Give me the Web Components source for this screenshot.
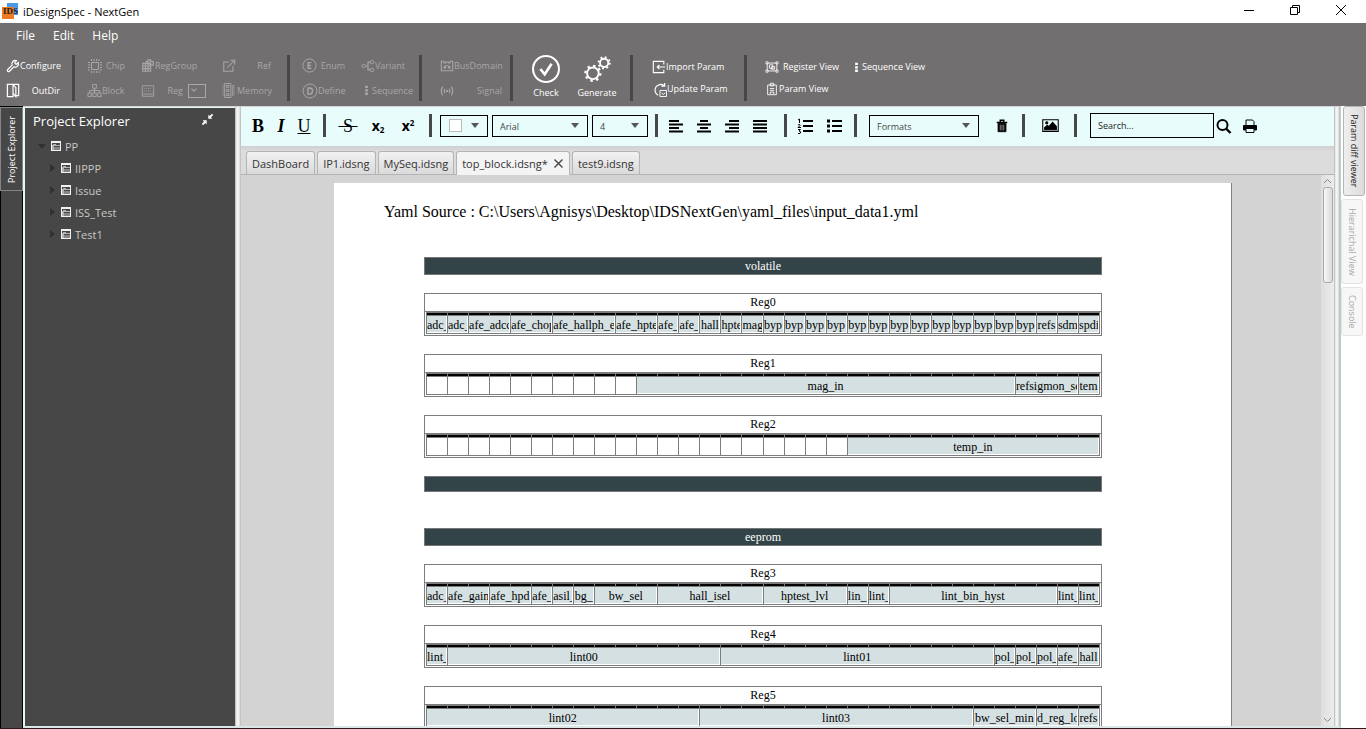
<!DOCTYPE html>
<html lang="en">
<head>
<meta charset="utf-8">
<title>iDesignSpec - NextGen</title>
<style>
  html, body { height: 100%; }
  body {
    margin: 0;
    overflow: hidden;
    font-family: "Open Sans", "Noto Sans", sans-serif;
    font-size: 12px;
    color: #222;
    --gray: #726f70;
    --dark: #474747;
    --mint: #e8fdfb;
  }
</style>
</head>
<body>
<ids-app></ids-app>

<script>
const ICONS = {
  wrench: '<path stroke-width="1.400" d="M2 14a1.400 1.400 0 0 1 0-2L7 7a3.800 3.800 0 0 1 5-5L10 4l.5 1.500L12 6l2-2a3.800 3.800 0 0 1-5 5l-5 5a1.400 1.400 0 0 1-2 0z"/>',
  outdir: '<path stroke-width="1.300" d="M1.500 1.500h6v13h-6zM7.500 1.500h6v12H10M7.500 1.500L10.500 5v9.500L7.500 11"/>',
  chip: '<path d="M4.500 4.500h7v7h-7z"/><path stroke-dasharray="1 1.500" stroke-width="2" d="M4 2h9M4 14h9M2 4v9M14 4v9"/>',
  block: '<path d="M6 1.500h4v4H6zM1 10.500h3.500v4H1zM6.200 10.500h3.600v4H6.200zM11.500 10.500H15v4h-3.500zM8 5.500v5M2.700 10.500V8h10.600v2.500"/>',
  reggroup: '<path stroke-width="1.300" d="M2 5h9v9H2zM2 8h9M2 11h9M5 5v9M8 5v9M6 5V3h2V1h3v2h3v4h-3M9 3v3h3"/>',
  reg: '<path d="M1.500 2h13v12h-13zM2 11.500h12" /><path stroke-dasharray="1 1" d="M4 5h8M4 8h8"/>',
  ref: '<path stroke-width="1.200" d="M8 3.500H2v10.500h10.500V8M6 10l7.500-7.500M9.500 1.500h5v5"/>',
  memory: '<path d="M2.500.5h7v15h-7zM11.500 2v12"/><path d="M4.500 2.500h3v2h-3zM4.500 7h3v2h-3zM4.500 11.500h3v2h-3z"/><path stroke-dasharray="1 1" d="M13 2v12M1 2v12"/>',
  enum: '<circle cx="8" cy="8" r="7"/><path stroke-width="1.400" d="M10 5H6.500v6H10M6.500 8h3"/>',
  define: '<circle cx="8" cy="8" r="7"/><path stroke-width="1.400" d="M6 5h2q2.500 0 2.500 3T8 11H6z"/>',
  variant: '<circle cx="3" cy="8" r="2"/><circle cx="12.500" cy="3.500" r="2"/><circle cx="12.500" cy="12.500" r="2"/><path stroke-width="1.300" d="M5 8h3M10.500 3.500H8v9h2.500"/>',
  dots: '<path fill="currentColor" stroke="none" d="M6 1h4v3.500H6zM6 6h4v3.500H6zM6 11h4v3.500H6z"/>',
  bus: '<path stroke-width="1.200" d="M1.500 4.500V2.500h3v2h2v-1h3v1h2v-2h3v11h-13z"/><path fill="currentColor" d="M4.500 8.500h2v2h-2zM9.500 8.500h2v2h-2zM6 7.500h4"/>',
  signal: '<path stroke-width="1.300" d="M3 3q-3 5 0 10M5.500 5.500q-1.500 2.500 0 5M13 3q3 5 0 10M10.500 5.500q1.500 2.500 0 5"/><circle cx="8" cy="8" r="1" fill="currentColor"/>',
  check: '<circle cx="8" cy="8" r="6.900" stroke-width="1.100"/><path stroke-width="1.400" d="M5 8l2.300 2.800 3.700-5.600"/>',
  gears: '<circle cx="5.800" cy="10.300" r="3.100"/><circle cx="5.800" cy="10.300" r="4" stroke-dasharray="1.300 1.842" stroke-width="1.200"/><circle cx="11.800" cy="4.700" r="2.200"/><circle cx="11.800" cy="4.700" r="3" stroke-dasharray="1 1.356" stroke-width="1"/>',
  import: '<path stroke-width="1.300" d="M13.500 5V1.500h-12v13h12V11M15 8H6M8.500 5.500L6 8l2.500 2.500"/>',
  update: '<path stroke-width="1.300" d="M6.500 14A6 6 0 1 1 13 4M13.500 1v3.500H10"/><path d="M8.500 9h7v6.500h-7zM10.500 11.500l1.500 2 2-2"/>',
  regview: '<path d="M2.500 3.500h11v9h-11z"/><path d="M5 5.500h4v4H5zM7.500 7.500h3.500v3H7.500z"/><path stroke-width=".8" d="M1 2h2.500v2.500H1zM12.500 2H15v2.500h-2.500zM1 11.500h2.500V14H1zM12.500 11.500H15V14h-2.500z"/>',
  paramview: '<path d="M3 3.500h10v11H3zM6 1.500h4v3H6zM5.500 7.500h5M5.500 9.500h5M6 14v-2.500h4V14"/>',
  collapse: '<path fill="currentColor" stroke="none" d="M9 2v5h5l-1.700-1.700L15 2.500 13.500 1l-2.800 2.700zM7 14V9H2l1.700 1.700L1 13.500 2.500 15l2.800-2.700z"/>',
  folder: '<path fill="currentColor" stroke="none" d="M1.333 1.333h13.334v13.334H1.333z"/><path fill="#474747" stroke="none" d="M2.667 4h10.666v9.333H2.667z"/><path fill="#b4b4b4" stroke="none" d="M2.667 13.333V6.667H4V5.333h4v1.334h5.333V8H5.333v5.333z"/><path fill="#858585" stroke="none" d="M5.333 9.333h8v4h-8z"/>',
  left: '<path stroke-width="2" d="M1 3h10M1 6.500h14M1 10h10M1 13.500h14"/>',
  center: '<path stroke-width="2" d="M4 3h8M1 6.500h14M4 10h8M1 13.500h14"/>',
  right: '<path stroke-width="2" d="M5 3h10M1 6.500h14M5 10h10M1 13.500h14"/>',
  justify: '<path stroke-width="2" d="M1 3h14M1 6.500h14M1 10h14M1 13.500h14"/>',
  ordered: '<path stroke-width="2" d="M6 3h10M6 8h10M6 13h10"/><path d="M1 2l1.500-1v4M1 7q2.500-1.500 2 .5L1 9.500h3M1 11.500h2.500L2 13q3 .5 1 2.500H1"/>',
  bullets: '<path stroke-width="2.200" d="M6 3h10M6 8h10M6 13h10"/><path stroke-width="3" d="M1 3h3M1 8h3M1 13h3"/>',
  trash: '<path fill="currentColor" d="M3.500 5h9v9.500h-9z"/><path stroke="#999" d="M6 6.500v6.500M8 6.500v6.500M10 6.500v6.500"/><path stroke-width="1.600" d="M2 4h12M6 3.500v-2h4v2"/>',
  image: '<path d="M.7 2.500h14.600v11H.7z"/><path fill="currentColor" d="M2.500 12v-2L5 8l1.500 1L10 5l3.500 4v3z"/><circle cx="4.500" cy="5.500" r="1" fill="currentColor"/>',
  search: '<circle cx="6.500" cy="7" r="5" stroke-width="2"/><path stroke-width="2.400" d="M10 10.500l4.500 4.500"/>',
  print: '<path fill="currentColor" d="M1.500 7.500h13V12h-2v-1.500h-9V12h-2z"/><path d="M4 7V2h6.500L12 3.500V7M4 11v3.500h8V11"/>'
};

const svg = (name, size = 14) =>
  `<svg width="${size}" height="${size}" viewBox="0 0 16 16" fill="none" stroke="currentColor" aria-hidden="true">${ICONS[name]}</svg>`;

function define(tag, render) {
  customElements.define(tag, class extends HTMLElement {
    connectedCallback() {
      if (this.shadowRoot) return;
      this.attachShadow({ mode: 'open' });
      this.shadowRoot.innerHTML = render(this);
    }
  });
}

/* ---------- window title ---------- */
define('ids-titlebar', () => `
  <style>
    :host { display: flex; align-items: center; height: 23px; padding-right: 2px; background: #fff; color: #000; }
    .logo { margin: 0 4px 0 2px; }
    h1 { font-size: 11px; font-weight: 400; margin: 0; flex: 1; line-height: 23px; }
    button { width: 46px; height: 20px; padding: 0; border: 0; background: none; display: grid; place-items: center; align-self: flex-start; }
  </style>
  <svg class="logo" width="17" height="17" viewBox="0 0 17 17">
    <path fill="#4b9ae8" d="M5 0h11v12H5z"/><path fill="#ee7b22" d="M0 4h12v12H0z"/>
    <text x="1" y="11" font-family="Liberation Serif, serif" font-size="9" font-weight="700" fill="#222">IDS</text>
  </svg>
  <h1>iDesignSpec - NextGen</h1>
  <button aria-label="Minimize"><svg width="12" height="12" fill="none" stroke="#000"><path d="M1 6.500h10"/></svg></button>
  <button aria-label="Restore"><svg width="12" height="12" fill="none" stroke="#000"><path d="M1.500 3.500h7v7h-7zM3.500 3.500v-2h7v7h-2"/></svg></button>
  <button aria-label="Close"><svg width="12" height="12" fill="none" stroke="#000"><path d="M1 1l10 10M11 1L1 11"/></svg></button>
`);

define('ids-menubar', () => `
  <style>
    :host { display: block; background: var(--gray); height: 26px; }
    nav { display: flex; gap: 18px; padding: 0 16px; }
    button { border: 0; background: none; padding: 0; font: 12px/26px "Open Sans", sans-serif; color: #fff; }
  </style>
  <nav><button>File</button><button>Edit</button><button>Help</button></nav>
`);

/* ---------- ribbon ---------- */
define('ribbon-item', el => `
  <style>
    :host { display: flex; }
    button {
      display: flex; align-items: center; justify-content: space-between; width: 100%; height: 18px;
      border: 0; padding: 0; background: none; color: #fff; white-space: nowrap;
      font: 9px/18px "Open Sans", sans-serif;
    }
    svg { flex: none; }
    button:disabled { color: #a9a7a7; }
    :host([tight]) button { justify-content: flex-start; }
    :host([big]) button { flex-direction: column; height: 48px; padding-bottom: 3px; line-height: 12px; }
  </style>
  <button ${el.hasAttribute('disabled') ? 'disabled' : ''}>${svg(el.getAttribute('icon'), el.hasAttribute('big') ? 30 : +(el.getAttribute('size') || 14))}<span><slot></slot></span></button>
`);

define('ribbon-group', () => `
  <style>
    :host { display: flex; align-items: center; }
    .items { display: grid; grid-auto-flow: column; grid-template-rows: var(--rows, 18px 18px); row-gap: var(--row-gap, 7px);
      column-gap: var(--col-gap, 16px); padding: var(--pad, 0 10px); grid-template-columns: var(--cols, auto); }
    .bar { width: 3px; height: 46px; background: var(--dark); }
    :host([last]) .bar { display: none; }
  </style>
  <div class="items"><slot></slot></div><div class="bar"></div>
`);

define('ids-ribbon', () => `
  <style>
    :host { display: flex; height: 57px; padding-top: 1px; box-sizing: border-box; background: var(--gray); }
    .setup { --cols: 54px; --pad: 0 12px 0 6px; }
    .design { --cols: 38px 65px 49px; --pad: 0 16px 0 12px; }
    .values { --cols: 43px 50px; --pad: 0 8px 0 12px; }
    .bus { --cols: 62px; --pad: 0 8px 0 18px; }
    .run { --rows: 48px; --cols: 38px 38px; --col-gap: 13px; --pad: 0 14px 0 14px; }
    .params { --cols: 72px; --pad: 0 20px 0 19px; --row-gap: 4px; }
    .views { --cols: 74px 72px; --col-gap: 12px; --pad: 0 18px; --row-gap: 4px; }
    .reg { display: flex; align-items: center; justify-content: space-between; }
    .reg ribbon-item { width: 42px; }
    .reg input { appearance: none; display: grid; place-items: start; width: 18px; height: 14px; margin: 0; border: 1px solid #a9a7a7; }
    .reg input::before { content: ""; width: 3px; height: 3px; margin: 2px 0 0 3px; border: solid #a9a7a7; border-width: 0 1px 1px 0; transform: rotate(45deg); }
  </style>
  <ribbon-group class="setup">
    <ribbon-item icon="wrench" tight>Configure</ribbon-item>
    <ribbon-item icon="outdir" size="15">OutDir</ribbon-item>
  </ribbon-group>
  <ribbon-group class="design">
    <ribbon-item icon="chip" size="16" disabled>Chip</ribbon-item>
    <ribbon-item icon="block" size="15" disabled tight>Block</ribbon-item>
    <ribbon-item icon="reggroup" size="14" disabled tight>RegGroup</ribbon-item>
    <div class="reg"><ribbon-item icon="reg" disabled>Reg</ribbon-item><input type="checkbox" aria-label="Reg type" disabled></div>
    <ribbon-item icon="ref" disabled>Ref</ribbon-item>
    <ribbon-item icon="memory" size="15" disabled tight>Memory</ribbon-item>
  </ribbon-group>
  <ribbon-group class="values">
    <ribbon-item icon="enum" size="15" disabled>Enum</ribbon-item>
    <ribbon-item icon="define" size="16" disabled tight>Define</ribbon-item>
    <ribbon-item icon="variant" disabled tight>Variant</ribbon-item>
    <ribbon-item icon="dots" size="11" disabled tight>Sequence</ribbon-item>
  </ribbon-group>
  <ribbon-group class="bus">
    <ribbon-item icon="bus" disabled>BusDomain</ribbon-item>
    <ribbon-item icon="signal" disabled>Signal</ribbon-item>
  </ribbon-group>
  <ribbon-group class="run">
    <ribbon-item icon="check" big>Check</ribbon-item>
    <ribbon-item icon="gears" big>Generate</ribbon-item>
  </ribbon-group>
  <ribbon-group class="params">
    <ribbon-item icon="import">Import Param</ribbon-item>
    <ribbon-item icon="update" size="15" tight>Update Param</ribbon-item>
  </ribbon-group>
  <ribbon-group class="views" last>
    <ribbon-item icon="regview">Register View</ribbon-item>
    <ribbon-item icon="paramview" tight>Param View</ribbon-item>
    <ribbon-item icon="dots" size="11" tight>Sequence View</ribbon-item>
  </ribbon-group>
`);

/* ---------- side rails ---------- */
define('left-rail', () => `
  <style>
    :host { display: flex; flex-direction: column; width: 23px; background: #000; }
    button { writing-mode: vertical-rl; transform: rotate(180deg); height: 84px; padding: 0; border: 1px solid #858585;
      background: var(--dark); color: #fff; font: 9px/21px "Open Sans", sans-serif; width: 23px; margin-top: 1px; }
    div { flex: 1; background: var(--dark); margin: 0 1px; }
  </style>
  <button>Project Explorer</button><div></div>
`);

define('right-rail', () => `
  <style>
    :host { display: flex; flex-direction: column; width: 25px; background: #fff; border-left: 1px solid #b9cfcc; align-items: flex-start; }
    button { writing-mode: vertical-rl; padding: 0; width: 22px; border: 1px solid #e3e3e3; border-radius: 3px;
      background: #f7f7f7; color: #aaa; font: 9px/18px "Open Sans", sans-serif; margin-top: 3px; height: 85px; }
    .on { height: 90px; background: linear-gradient(90deg, #efefef, #dcdcdc); border-color: #b5b5b5; color: #222; margin: 0 0 0 2px; }
    .short { height: 49px; }
  </style>
  <button class="on">Param diff viewer</button>
  <button>Hierarichal View</button>
  <button class="short">Console</button>
`);

define('split-handle', () => `
  <style>
    :host { display: block; width: 4px; background: linear-gradient(90deg, #e2e2e2, #fafafa, #d8d8d8); border: solid #c4c4c4; border-width: 0 1px; }
  </style>
`);

/* ---------- project explorer ---------- */
define('tree-node', el => `
  <style>
    :host { display: block; }
    .row { display: flex; align-items: center; height: 22px; color: #c9c7c4; font-size: 11px; }
    .twist { width: 0; height: 0; border: 4px solid transparent; border-left: 5px solid #303030; border-right: 0; margin-left: 1px; }
    :host([open]) > .row .twist, .open { border: 4px solid transparent; border-top: 5px solid #303030; border-bottom: 0; margin-left: 0; }
    svg { color: #f2f2f2; margin: 0 3px 0 5px; }
    :host([open]) svg { margin-left: 4px; }
    .kids { padding-left: 11px; }
  </style>
  <div class="row"><span class="twist"></span>${svg('folder', 12)}<span>${el.getAttribute('label')}</span></div>
  <div class="kids"><slot></slot></div>
`);

define('project-explorer', () => `
  <style>
    :host { display: block; width: 210px; background: var(--dark); border: solid #e8f8f6; border-width: 1px 0 0 2px; box-sizing: content-box; }
    header { display: flex; justify-content: space-between; align-items: center; padding: 0 21px 0 8px; height: 27px; }
    h2 { margin: 0; font-size: 13px; font-weight: 400; line-height: 18px; padding-bottom: 1px; color: #fff; }
    header button { border: 0; padding: 0 0 5px; background: none; color: #fff; display: flex; }
    .tree { padding-left: 13px; }
  </style>
  <header><h2>Project Explorer</h2><button aria-label="Collapse">${svg('collapse', 13)}</button></header>
  <div class="tree">
    <tree-node label="PP" open>
      <tree-node label="IIPPP"></tree-node>
      <tree-node label="Issue"></tree-node>
      <tree-node label="ISS_Test"></tree-node>
      <tree-node label="Test1"></tree-node>
    </tree-node>
  </div>
`);

/* ---------- formatting toolbar ---------- */
define('tool-select', el => `
  <style>
    :host { display: grid; align-items: center; width: var(--w); box-sizing: border-box; height: 22px; border: 1px solid #000; }
    select { grid-area: 1 / 1; appearance: none; width: 100%; height: 20px; border: 0; padding: 2px 0 0 7px; margin: 0;
      background: none; color: #444; font: 9px/18px "Open Sans", sans-serif; }
    i { grid-area: 1 / 1; justify-self: end; margin-right: 8px; border: 4px solid transparent; border-top: 5px solid #555; border-bottom: 0; pointer-events: none; }
    b { grid-area: 1 / 1; width: 11px; height: 11px; margin-left: 8px; border: 1px solid #bbb; background: #fff; pointer-events: none; }
  </style>
  <select aria-label="${el.getAttribute('name')}"><option>${el.getAttribute('value') || ''}</option></select>
  ${el.hasAttribute('swatch') ? '<b></b>' : ''}<i></i>
`);

define('format-bar', () => `
  <style>
    :host { display: flex; align-items: center; height: 37px; padding-bottom: 2px; background: var(--mint); }
    .g { display: flex; align-items: center; height: 23px; border-right: 3px solid var(--dark); }
    .g:last-child { border: 0; }
    .text { gap: 5px; padding: 0 10px 0 8px; }
    .script { gap: 12px; padding: 0 12px 0 13px; }
    .font { gap: 4px; padding: 0 7px 0 8px; }
    .align { gap: 10px; padding: 0 15px 0 9px; }
    .list { gap: 11px; padding: 0 11px 0 9px; }
    .style { gap: 14px; padding: 0 11px 0 12px; }
    .media { padding: 0 15px 0 16px; }
    .find { gap: 1px; padding-left: 13px; }
    button { width: 18px; height: 22px; border: 0; padding: 0; background: none; color: #000; display: grid; place-items: center;
      font: bold 18px/22px "Liberation Serif", serif; }
    .x { font: bold 14px/22px "Open Sans", sans-serif; display: flex; align-items: center; justify-content: center; }
    sub, sup { font-size: 8px; line-height: 8px; vertical-align: baseline; }
    sub { align-self: flex-end; padding-bottom: 3px; }
    sup { align-self: flex-start; padding-top: 4px; }
    input { width: 124px; height: 25px; box-sizing: border-box; border: 1px solid #000; background: none; padding: 0 7px; font: 9px "Open Sans", sans-serif; }
    input::placeholder { color: #222; opacity: 1; }
    .print { margin-left: 7px; }
    .plain { font-weight: 400; justify-content: center; white-space: nowrap; }
  </style>
  <div class="g text"><button>B</button><button><i>I</i></button><button class="plain"><u>U</u></button></div>
  <div class="g script"><button class="plain"><s>&nbsp;S&nbsp;</s></button><button class="x">x<sub>2</sub></button><button class="x">x<sup>2</sup></button></div>
  <div class="g font">
    <tool-select name="Colour" swatch style="--w: 48px"></tool-select>
    <tool-select name="Font" value="Arial" style="--w: 96px"></tool-select>
    <tool-select name="Size" value="4" style="--w: 56px"></tool-select>
  </div>
  <div class="g align">
    <button aria-label="Left">${svg('left', 16)}</button><button aria-label="Center">${svg('center', 16)}</button>
    <button aria-label="Right">${svg('right', 16)}</button><button aria-label="Justify">${svg('justify', 16)}</button>
  </div>
  <div class="g list"><button aria-label="Numbered">${svg('ordered', 16)}</button><button aria-label="Bullets">${svg('bullets', 16)}</button></div>
  <div class="g style"><tool-select name="Formats" value="Formats" style="--w: 110px"></tool-select><button aria-label="Delete">${svg('trash')}</button></div>
  <div class="g media"><button aria-label="Image">${svg('image', 17)}</button></div>
  <div class="g find"><input type="search" aria-label="Search" placeholder="Search..."><button aria-label="Find">${svg('search', 16)}</button><button class="print" aria-label="Print">${svg('print', 16)}</button></div>
`);

define('doc-tabs', () => `
  <style>
    :host { display: flex; align-items: flex-end; gap: 2px; height: 28px; padding-left: 5px; border-bottom: 1px solid #b4b4b4;
      background: linear-gradient(#cfcfcf, #dcdcdc 5px); }
    button { height: 23px; padding: 0 5px; border: 1px solid #b4b4b4; border-bottom: 0; border-radius: 3px 3px 0 0;
      background: linear-gradient(#f2f2f2, #dadada); color: #333; font: 11px/23px "Open Sans", sans-serif; white-space: nowrap; }
    .on { background: #f4f4f4; height: 24px; margin-bottom: -1px; padding-right: 6px; display: flex; align-items: center; gap: 6px; }
  </style>
  <button>DashBoard</button><button>IP1.idsng</button><button>MySeq.idsng</button>
  <button class="on">top_block.idsng*<svg width="9" height="9" fill="none" stroke="#444" stroke-width="1.400"><path d="M.5.500l8 8M8.500.500l-8 8"/></svg></button>
  <button>test9.idsng</button>
`);

/* ---------- register document ---------- */
define('doc-banner', () => `
  <style>
    :host { display: block; box-sizing: border-box; min-height: 16px; border: 1px solid #777; background: #334448; color: #fff;
      font-size: 12px; line-height: 16px; text-align: center; }
  </style>
  <slot></slot>
`);

// fields: "name:bits" pairs, "-" for an unused bit
define('register-map', el => {
  const cells = el.getAttribute('fields').split(' ').map(f => {
    const [name, bits] = f.split(':');
    return name === '-' ? '<td></td>'.repeat(bits) : `<td colspan="${bits || 1}"><div>${name}</div></td>`;
  }).join('');
  return `
  <style>
    :host { display: block; border: 1px solid #7d7d7d; font-size: 12px; color: #000; }
    h3 { margin: 0; font-size: 12px; font-weight: 400; line-height: 17px; text-align: center; border-bottom: 1px solid #7d7d7d; }
    .map { padding: 0 1px 1px; }
    table { width: 100%; table-layout: fixed; border-collapse: collapse; }
    td { border: 1px solid #7d7d7d; padding: 0 1px 1px 0; height: 16px; }
    .bits td { height: 2px; padding: 0; background: #000; }
    div div { padding-top: 1px; line-height: 16px; height: 15px; overflow: hidden; white-space: nowrap; text-align: center; background: #d5e0e2; }
  </style>
  <h3>${el.getAttribute('name')}</h3>
  <div class="map"><table><tr class="bits">${'<td></td>'.repeat(32)}</tr><tr>${cells}</tr></table></div>`;
});

define('doc-page', () => `
  <style>
    :host { display: block; background: #fff; border-right: 1px solid #808080; font-family: "Liberation Serif", serif; color: #000; padding-top: 19px; }
    p { margin: 0 50px; font-size: 16px; line-height: 20px; }
    .regs { display: flex; flex-direction: column; gap: 18px; margin: 35px 129px 0 90px; }
    .end { margin-bottom: 18px; }
  </style>
  <p>Yaml Source : C:\\Users\\Agnisys\\Desktop\\IDSNextGen\\yaml_files\\input_data1.yml</p>
  <div class="regs">
    <doc-banner>volatile</doc-banner>
    <register-map name="Reg0" fields="adc_ adc_ afe_adcc:2 afe_chop:2 afe_hallph_e:3 afe_hpte:2 afe_ afe_ hall hpte mag byp byp byp byp byp byp byp byp byp byp byp byp byp refs sdm spdi"></register-map>
    <register-map name="Reg1" fields="-:10 mag_in:18 refsigmon_se:3 tem"></register-map>
    <register-map name="Reg2" fields="-:20 temp_in:12"></register-map>
    <doc-banner class="end"></doc-banner>
    <doc-banner>eeprom</doc-banner>
    <register-map name="Reg3" fields="adc_ afe_gain:2 afe_hpd:2 afe_ asil_ bg_ bw_sel:3 hall_isel:5 hptest_lvl:4 lin_ lint_ lint_bin_hyst:8 lint_ lint_"></register-map>
    <register-map name="Reg4" fields="lint_ lint00:13 lint01:13 pol_ pol_ pol_ afe_ hall"></register-map>
    <register-map name="Reg5" fields="lint02:13 lint03:13 bw_sel_min:3 d_reg_lo:2 refs"></register-map>
  </div>
`);

define('scroll-track', () => `
  <style>
    :host { display: flex; flex-direction: column; align-items: center; width: 13px; background: linear-gradient(90deg, #dedede, #ececec); padding: 3px 0; box-sizing: border-box; }
    .thumb { width: 8px; height: 94px; margin-top: 3px; border: 1px solid #aaa; border-radius: 3px; background: linear-gradient(90deg, #f6f6f6, #dcdcdc); }
    .fill { flex: 1; }
    svg { flex: none; }
  </style>
  <svg width="9" height="6" fill="none" stroke="#888"><path d="M1 5l3.500-3.500L8 5"/></svg>
  <div class="thumb"></div><div class="fill"></div>
  <svg width="9" height="6" fill="none" stroke="#888"><path d="M1 1l3.500 3.500L8 1"/></svg>
`);

define('ids-app', () => `
  <style>
    :host { display: flex; flex-direction: column; height: 100vh; }
    .body { flex: 1; min-height: 0; display: flex; background: #000; border-bottom: 1px solid #2a1a20; }
    .work { flex: 1; min-width: 0; display: flex; border-top: 1px solid #d5d3d3; border-bottom: 2px solid #d9e8e6; }
    main { flex: 1; min-width: 0; display: flex; flex-direction: column; }
    .view { flex: 1; min-height: 0; display: flex; background: #d3d3d3; }
    .scroll { flex: 1; min-width: 0; overflow: hidden; padding: 8px 89px 0 93px; }
  </style>
  <ids-titlebar></ids-titlebar>
  <ids-menubar></ids-menubar>
  <ids-ribbon></ids-ribbon>
  <div class="body">
    <left-rail></left-rail>
    <div class="work">
      <project-explorer></project-explorer>
      <split-handle></split-handle>
      <main>
        <format-bar></format-bar>
        <doc-tabs></doc-tabs>
        <div class="view">
          <div class="scroll"><doc-page></doc-page></div>
          <scroll-track></scroll-track>
        </div>
      </main>
      <split-handle></split-handle>
    </div>
    <right-rail></right-rail>
  </div>
`);
</script>
</body>
</html>
